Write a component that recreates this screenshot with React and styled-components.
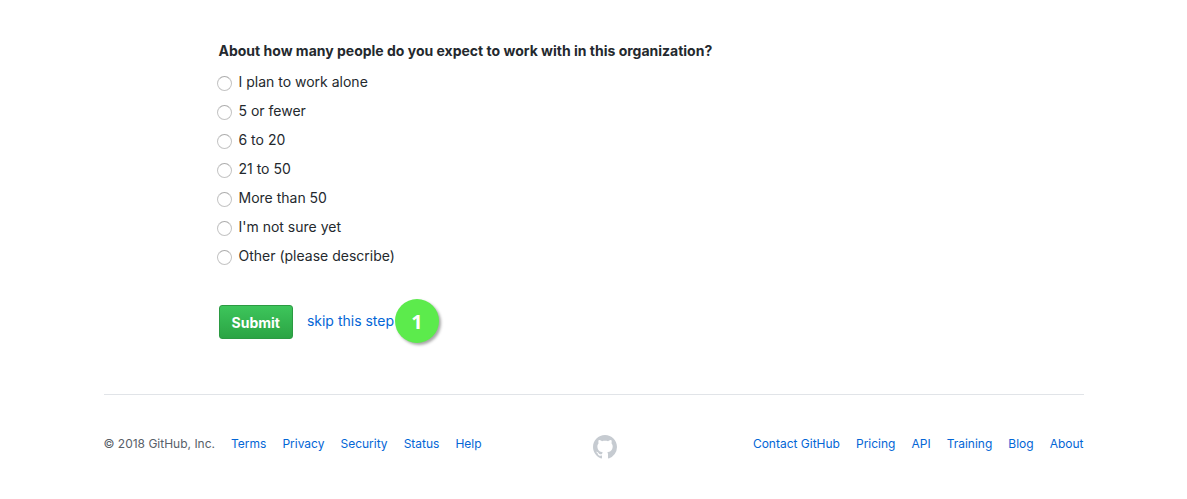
import React from "react";
import styled, { createGlobalStyle } from "styled-components";

const GlobalStyle = createGlobalStyle`
  *, *::before, *::after {
    box-sizing: border-box;
  }
  body {
    margin: 0;
    background: #fff;
    color: #24292e;
    font-family: Inter, "Liberation Sans", sans-serif;
    font-size: 14px;
    line-height: 21px;
  }
`;

const Page = styled.div`
  max-width: 980px;
  margin: 0 auto;
`;

const SurveyForm = styled.form`
  max-width: 750px;
  margin: 0 auto;
  padding: 40px 0 55px;
`;

const Question = styled.fieldset`
  min-width: 0;
  margin: 0;
  padding: 0;
  border: 0;
`;

const QuestionTitle = styled.legend`
  padding: 0;
  margin-bottom: 10px;
  font-weight: 700;
`;

const Options = styled.div`
  display: flex;
  flex-direction: column;
  align-items: flex-start;
  gap: 8px;
`;

const Option = styled.label`
  display: flex;
  align-items: center;
  gap: 7px;
  margin-left: -2px;
`;

const Radio = styled.input`
  appearance: none;
  width: 15px;
  height: 15px;
  margin: 4px 0 0;
  border: 1px solid #c4c4c4;
  border-top-color: #acacac;
  border-radius: 50%;
  background: #fff;

  &:checked {
    border: 5px solid #0366d6;
  }
`;

const Actions = styled.div`
  display: flex;
  align-items: center;
  margin-top: 39px;
`;

const SubmitButton = styled.button`
  height: 34px;
  padding: 0 12px;
  border: 1px solid #2b9a42;
  border-radius: 3px;
  background: linear-gradient(#3dc55b, #2ba444);
  color: #fff;
  font: inherit;
  font-weight: 700;
  cursor: pointer;
`;

const Link = styled.a`
  color: #0366d6;
  text-decoration: none;

  &:hover {
    text-decoration: underline;
  }
`;

const SkipLink = styled(Link)`
  margin: 0 0 4px 14px;
`;

const StepMarker = styled.span`
  display: flex;
  align-items: center;
  justify-content: center;
  width: 44px;
  height: 44px;
  margin: -6px 0 -4px 1px;
  border-radius: 50%;
  background: #5ceb4c;
  box-shadow: 2px 2px 3px rgba(0, 0, 0, 0.35);
  color: #fff;
  font-family: "Noto Sans", sans-serif;
  font-size: 20px;
  font-weight: 700;
`;

const Footer = styled.footer`
  display: flex;
  justify-content: space-between;
  padding: 40px 0;
  border-top: 1px solid #e1e4e8;
  color: #586069;
  font-size: 12px;
  line-height: 18px;
`;

const FooterList = styled.ul`
  display: flex;
  flex-wrap: wrap;
  gap: 16px;
  margin: 0;
  padding: 0;
  list-style: none;
`;

const LogoLink = styled.a`
  display: block;
  height: 24px;
  margin-right: 24px;
  color: #c6cbd1;
`;

const Logo = styled.svg`
  display: block;
  width: 24px;
  height: 24px;
  fill: currentColor;
`;

const options = [
  "I plan to work alone",
  "5 or fewer",
  "6 to 20",
  "21 to 50",
  "More than 50",
  "I'm not sure yet",
  "Other (please describe)",
];

const siteLinks = ["Terms", "Privacy", "Security", "Status", "Help"];
const companyLinks = ["Contact GitHub", "Pricing", "API", "Training", "Blog", "About"];

function FooterLinks({ links }) {
  return links.map((name) => (
    <li key={name}>
      <Link href="#">{name}</Link>
    </li>
  ));
}

export default function App() {
  return (
    <>
      <GlobalStyle />
      <Page>
        <main>
          <SurveyForm onSubmit={(event) => event.preventDefault()}>
            <Question>
              <QuestionTitle>
                About how many people do you expect to work with in this organization?
              </QuestionTitle>
              <Options>
                {options.map((text) => (
                  <Option key={text}>
                    <Radio type="radio" name="team-size" value={text} />
                    {text}
                  </Option>
                ))}
              </Options>
            </Question>
            <Actions>
              <SubmitButton type="submit">Submit</SubmitButton>
              <SkipLink href="#">skip this step</SkipLink>
              <StepMarker>1</StepMarker>
            </Actions>
          </SurveyForm>
        </main>
        <Footer>
          <FooterList>
            <li>© 2018 GitHub, Inc.</li>
            <FooterLinks links={siteLinks} />
          </FooterList>
          <LogoLink href="#" aria-label="GitHub">
            <Logo viewBox="0 0 16 16" aria-hidden="true">
              <path
                fillRule="evenodd"
                d="M8 0C3.58 0 0 3.58 0 8c0 3.54 2.29 6.53 5.47 7.59.4.07.55-.17.55-.38 0-.19-.01-.82-.01-1.49-2.01.37-2.53-.49-2.69-.94-.09-.23-.48-.94-.82-1.13-.28-.15-.68-.52-.01-.53.63-.01 1.08.58 1.23.82.72 1.21 1.87.87 2.33.66.07-.52.28-.87.51-1.07-1.78-.2-3.64-.89-3.64-3.95 0-.87.31-1.59.82-2.15-.08-.2-.36-1.02.08-2.12 0 0 .67-.21 2.2.82.64-.18 1.32-.27 2-.27.68 0 1.36.09 2 .27 1.53-1.04 2.2-.82 2.2-.82.44 1.1.16 1.92.08 2.12.51.56.82 1.27.82 2.15 0 3.07-1.87 3.75-3.65 3.95.29.25.54.73.54 1.48 0 1.07-.01 1.93-.01 2.2 0 .21.15.46.55.38A8.013 8.013 0 0 0 16 8c0-4.42-3.58-8-8-8z"
              />
            </Logo>
          </LogoLink>
          <FooterList>
            <FooterLinks links={companyLinks} />
          </FooterList>
        </Footer>
      </Page>
    </>
  );
}
